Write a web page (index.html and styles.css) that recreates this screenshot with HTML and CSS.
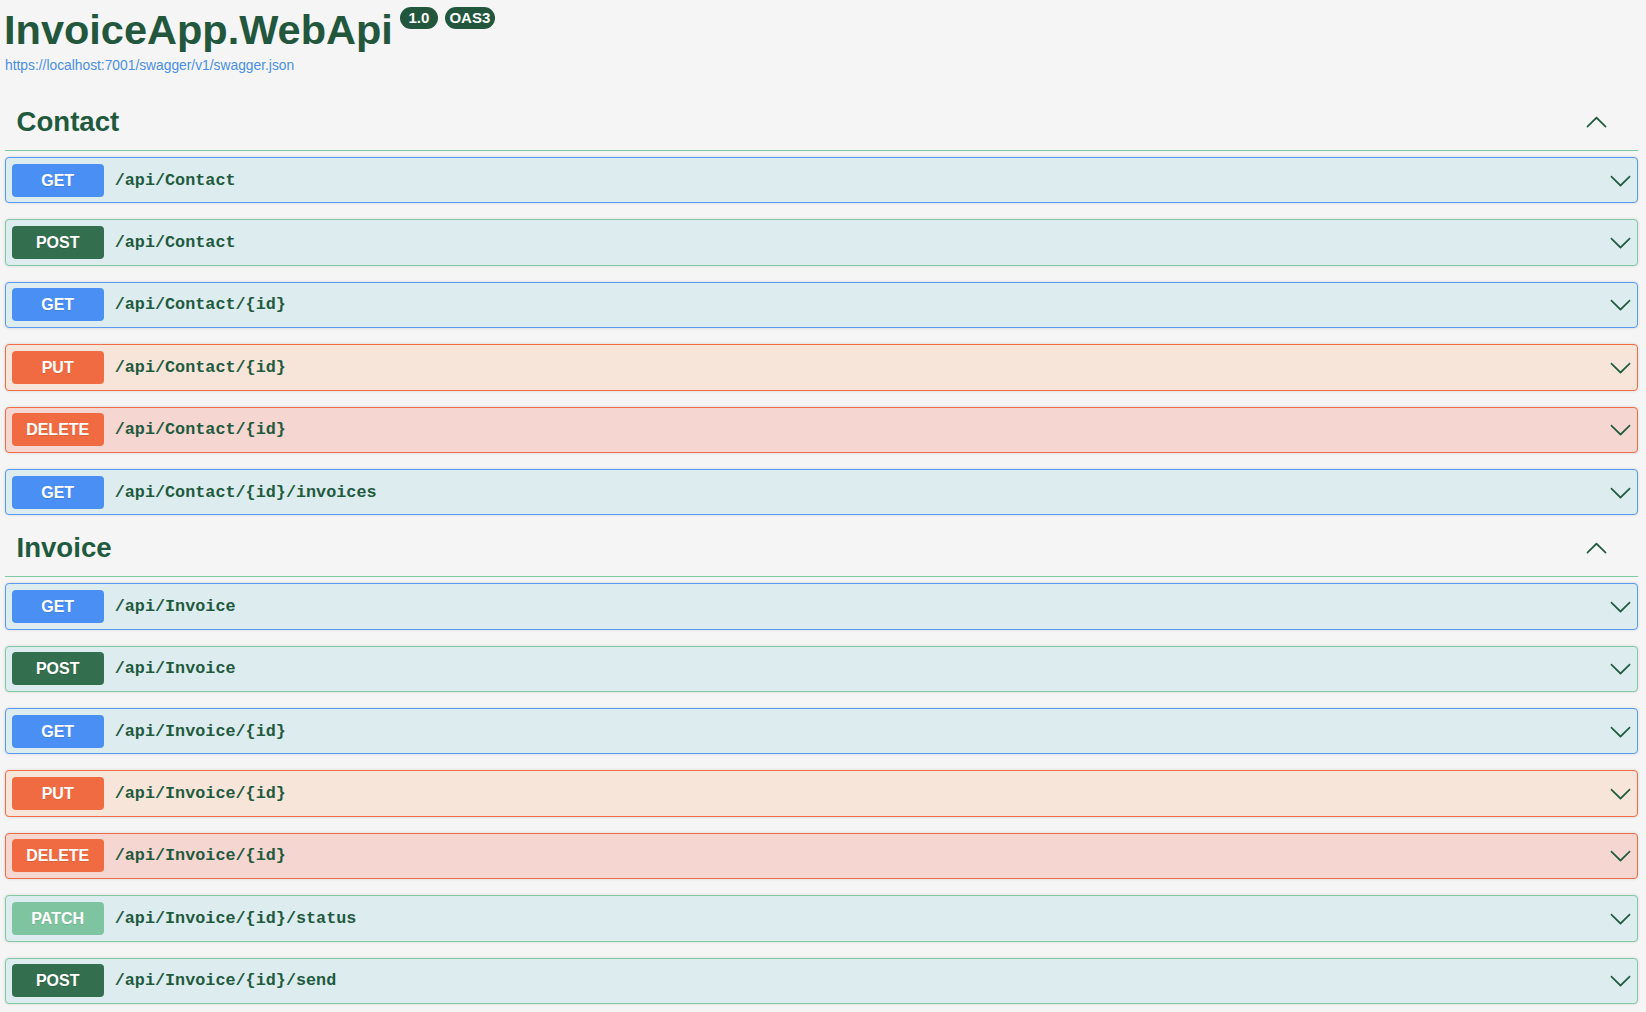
FILE: index.html
```html
<!DOCTYPE html>
<html lang="en">
<head>
<meta charset="utf-8">
<title>InvoiceApp.WebApi</title>
<link rel="stylesheet" href="styles.css">
</head>
<body>
<div class="page">
  <header class="info">
    <div class="title-row">
      <h1 class="title">InvoiceApp.WebApi</h1>
      <span class="pill">1.0</span>
      <span class="pill">OAS3</span>
    </div>
    <a class="spec-link" href="#">https://localhost:7001/swagger/v1/swagger.json</a>
  </header>

  <section class="tag-section">
    <h4 class="tag">
      <span>Contact</span>
      <svg class="arrow-up" viewBox="0 0 20 20" width="23" height="23"><path d="M17.418 14.908c.272.268.709.268.979 0s.271-.701 0-.969l-7.908-7.83c-.27-.268-.707-.268-.979 0l-7.908 7.83c-.27.268-.27.701 0 .969.271.268.709.268.979 0L10 7.767l7.418 7.141z"/></svg>
    </h4>
    <div class="op op-get"><span class="method">GET</span><span class="path">/api/Contact</span><svg class="arrow" viewBox="0 0 20 20" width="23" height="23"><path d="M17.418 6.109c.272-.268.709-.268.979 0s.271.701 0 .969l-7.908 7.83c-.27.268-.707.268-.979 0l-7.908-7.83c-.27-.268-.27-.701 0-.969.271-.268.709-.268.979 0L10 13.25l7.418-7.141z"/></svg></div>
    <div class="op op-post"><span class="method">POST</span><span class="path">/api/Contact</span><svg class="arrow" viewBox="0 0 20 20" width="23" height="23"><path d="M17.418 6.109c.272-.268.709-.268.979 0s.271.701 0 .969l-7.908 7.83c-.27.268-.707.268-.979 0l-7.908-7.83c-.27-.268-.27-.701 0-.969.271-.268.709-.268.979 0L10 13.25l7.418-7.141z"/></svg></div>
    <div class="op op-get"><span class="method">GET</span><span class="path">/api/Contact/{id}</span><svg class="arrow" viewBox="0 0 20 20" width="23" height="23"><path d="M17.418 6.109c.272-.268.709-.268.979 0s.271.701 0 .969l-7.908 7.83c-.27.268-.707.268-.979 0l-7.908-7.83c-.27-.268-.27-.701 0-.969.271-.268.709-.268.979 0L10 13.25l7.418-7.141z"/></svg></div>
    <div class="op op-put"><span class="method">PUT</span><span class="path">/api/Contact/{id}</span><svg class="arrow" viewBox="0 0 20 20" width="23" height="23"><path d="M17.418 6.109c.272-.268.709-.268.979 0s.271.701 0 .969l-7.908 7.83c-.27.268-.707.268-.979 0l-7.908-7.83c-.27-.268-.27-.701 0-.969.271-.268.709-.268.979 0L10 13.25l7.418-7.141z"/></svg></div>
    <div class="op op-delete"><span class="method">DELETE</span><span class="path">/api/Contact/{id}</span><svg class="arrow" viewBox="0 0 20 20" width="23" height="23"><path d="M17.418 6.109c.272-.268.709-.268.979 0s.271.701 0 .969l-7.908 7.83c-.27.268-.707.268-.979 0l-7.908-7.83c-.27-.268-.27-.701 0-.969.271-.268.709-.268.979 0L10 13.25l7.418-7.141z"/></svg></div>
    <div class="op op-get"><span class="method">GET</span><span class="path">/api/Contact/{id}/invoices</span><svg class="arrow" viewBox="0 0 20 20" width="23" height="23"><path d="M17.418 6.109c.272-.268.709-.268.979 0s.271.701 0 .969l-7.908 7.83c-.27.268-.707.268-.979 0l-7.908-7.83c-.27-.268-.27-.701 0-.969.271-.268.709-.268.979 0L10 13.25l7.418-7.141z"/></svg></div>
  </section>

  <section class="tag-section">
    <h4 class="tag">
      <span>Invoice</span>
      <svg class="arrow-up" viewBox="0 0 20 20" width="23" height="23"><path d="M17.418 14.908c.272.268.709.268.979 0s.271-.701 0-.969l-7.908-7.83c-.27-.268-.707-.268-.979 0l-7.908 7.83c-.27.268-.27.701 0 .969.271.268.709.268.979 0L10 7.767l7.418 7.141z"/></svg>
    </h4>
    <div class="op op-get"><span class="method">GET</span><span class="path">/api/Invoice</span><svg class="arrow" viewBox="0 0 20 20" width="23" height="23"><path d="M17.418 6.109c.272-.268.709-.268.979 0s.271.701 0 .969l-7.908 7.83c-.27.268-.707.268-.979 0l-7.908-7.83c-.27-.268-.27-.701 0-.969.271-.268.709-.268.979 0L10 13.25l7.418-7.141z"/></svg></div>
    <div class="op op-post"><span class="method">POST</span><span class="path">/api/Invoice</span><svg class="arrow" viewBox="0 0 20 20" width="23" height="23"><path d="M17.418 6.109c.272-.268.709-.268.979 0s.271.701 0 .969l-7.908 7.83c-.27.268-.707.268-.979 0l-7.908-7.83c-.27-.268-.27-.701 0-.969.271-.268.709-.268.979 0L10 13.25l7.418-7.141z"/></svg></div>
    <div class="op op-get"><span class="method">GET</span><span class="path">/api/Invoice/{id}</span><svg class="arrow" viewBox="0 0 20 20" width="23" height="23"><path d="M17.418 6.109c.272-.268.709-.268.979 0s.271.701 0 .969l-7.908 7.83c-.27.268-.707.268-.979 0l-7.908-7.83c-.27-.268-.27-.701 0-.969.271-.268.709-.268.979 0L10 13.25l7.418-7.141z"/></svg></div>
    <div class="op op-put"><span class="method">PUT</span><span class="path">/api/Invoice/{id}</span><svg class="arrow" viewBox="0 0 20 20" width="23" height="23"><path d="M17.418 6.109c.272-.268.709-.268.979 0s.271.701 0 .969l-7.908 7.83c-.27.268-.707.268-.979 0l-7.908-7.83c-.27-.268-.27-.701 0-.969.271-.268.709-.268.979 0L10 13.25l7.418-7.141z"/></svg></div>
    <div class="op op-delete"><span class="method">DELETE</span><span class="path">/api/Invoice/{id}</span><svg class="arrow" viewBox="0 0 20 20" width="23" height="23"><path d="M17.418 6.109c.272-.268.709-.268.979 0s.271.701 0 .969l-7.908 7.83c-.27.268-.707.268-.979 0l-7.908-7.83c-.27-.268-.27-.701 0-.969.271-.268.709-.268.979 0L10 13.25l7.418-7.141z"/></svg></div>
    <div class="op op-patch"><span class="method">PATCH</span><span class="path">/api/Invoice/{id}/status</span><svg class="arrow" viewBox="0 0 20 20" width="23" height="23"><path d="M17.418 6.109c.272-.268.709-.268.979 0s.271.701 0 .969l-7.908 7.83c-.27.268-.707.268-.979 0l-7.908-7.83c-.27-.268-.27-.701 0-.969.271-.268.709-.268.979 0L10 13.25l7.418-7.141z"/></svg></div>
    <div class="op op-post"><span class="method">POST</span><span class="path">/api/Invoice/{id}/send</span><svg class="arrow" viewBox="0 0 20 20" width="23" height="23"><path d="M17.418 6.109c.272-.268.709-.268.979 0s.271.701 0 .969l-7.908 7.83c-.27.268-.707.268-.979 0l-7.908-7.83c-.27-.268-.27-.701 0-.969.271-.268.709-.268.979 0L10 13.25l7.418-7.141z"/></svg></div>
  </section>
</div>
</body>
</html>
```
FILE: styles.css
```css
html, body {
  margin: 0;
  padding: 0;
  background: #f5f5f5;
}

body {
  font-family: "Liberation Sans", Arial, sans-serif;
  color: #1f5a3e;
}

.page {
  padding: 0 8px 0 5px;
}

/* ---------- header ---------- */
.info {
  display: flex;
  flex-direction: column;
  align-items: flex-start;
  margin-bottom: 31px;
}

.title-row {
  display: flex;
  align-items: flex-start;
  padding-top: 6px;
}

.title {
  margin: 0 0 0 -1px;
  font-size: 41.5px;
  line-height: 48px;
  font-weight: 700;
  color: #22573d;
}

.pill {
  display: inline-block;
  margin: 1px 0 0 7px;
  min-width: 38px;
  height: 22px;
  padding: 0 4.5px;
  box-sizing: border-box;
  border-radius: 12px;
  background: #22573d;
  color: #fff;
  font-size: 15px;
  font-weight: 700;
  line-height: 22px;
  text-align: center;
}

.spec-link {
  margin-top: 4px;
  font-size: 13.8px;
  line-height: 16px;
  color: #4a8fe6;
  text-decoration: none;
}

/* ---------- tag sections ---------- */
.tag-section {
  display: flex;
  flex-direction: column;
}

.tag {
  display: flex;
  align-items: center;
  justify-content: space-between;
  margin: 0 0 6px;
  padding: 0.5px 30px 12.5px 11.5px;
  font-size: 27.6px;
  line-height: 32px;
  font-weight: 700;
  color: #1f5a3e;
  border-bottom: 1px solid #7ecaa2;
}

.arrow-up,
.arrow {
  flex: none;
  fill: #1f5a3e;
}

.arrow {
  margin-right: -1px;
}

/* ---------- operations ---------- */
.op {
  display: flex;
  align-items: center;
  margin-bottom: 16px;
  padding: 5.7px;
  border: 1px solid #5a9af2;
  border-radius: 4px;
  background: #dcecef;
  box-shadow: 0 0 3px rgba(0, 0, 0, 0.14);
}

.method {
  flex: none;
  width: 92px;
  height: 33px;
  border-radius: 4px;
  color: #fff;
  font-size: 16px;
  font-weight: 700;
  line-height: 33px;
  text-align: center;
  text-shadow: 0 1px 0 rgba(0, 0, 0, 0.1);
}

.path {
  flex: 1;
  padding: 0 11px;
  font-family: "Liberation Mono", "DejaVu Sans Mono", monospace;
  font-size: 16.8px;
  font-weight: 700;
  color: #1f5a3e;
}

.op-get { border-color: #5a9af2; background: #dcecef; }
.op-get .method { background: #4a8ff3; }

.op-post { border-color: #82c9a4; background: #dcecef; }
.op-post .method { background: #336e4e; }

.op-patch { border-color: #82c9a4; background: #dcecef; }
.op-patch .method { background: #7fc4a0; }

.op-put { border-color: #f26c46; background: #f6e5d8; }
.op-put .method { background: #f06b42; }

.op-delete { border-color: #ef6c48; background: #f5d6d0; }
.op-delete .method { background: #f06b42; }
```
